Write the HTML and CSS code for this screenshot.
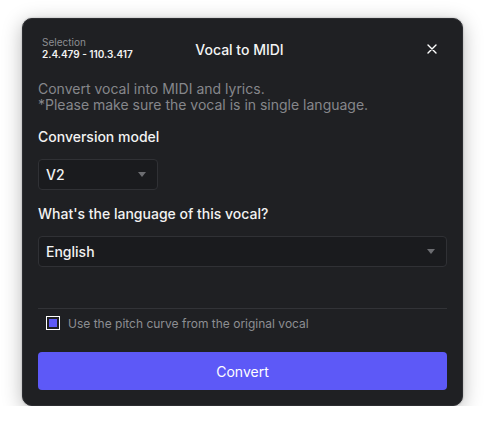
FILE: index.html
```html
<!DOCTYPE html>
<html>
<head>
<meta charset="utf-8">
<link rel="stylesheet" href="styles.css">
</head>
<body>
<div class="dialog">
  <div class="header">
    <div class="selection">
      <div class="sel-label">Selection</div>
      <div class="sel-range">2.4.479 - 110.3.417</div>
    </div>
    <div class="title">Vocal to MIDI</div>
    <div class="close">
      <svg width="10" height="10" viewBox="0 0 10 10"><path d="M1 1L9 9M9 1L1 9" stroke="#fff" stroke-width="1.4" stroke-linecap="round" fill="none"/></svg>
    </div>
  </div>
  <div class="desc">Convert vocal into MIDI and lyrics.<br>*Please make sure the vocal is in single language.</div>
  <div class="label">Conversion model</div>
  <div class="select small">
    <span>V2</span>
    <span class="arrow"></span>
  </div>
  <div class="label">What's the language of this vocal?</div>
  <div class="select">
    <span>English</span>
    <span class="arrow"></span>
  </div>
  <div class="sep"></div>
  <div class="check-row">
    <span class="checkbox"><span class="fill"></span></span>
    <span class="check-text">Use the pitch curve from the original vocal</span>
  </div>
  <div class="button">Convert</div>
</div>
</body>
</html>
```
FILE: styles.css
```css
* { box-sizing: border-box; }
html, body { margin: 0; padding: 0; background: #ffffff; }
body {
  font-family: Inter, "Noto Sans", "Liberation Sans", sans-serif;
  padding: 18px 0 0 22px;
}
.dialog {
  width: 441px;
  height: 388px;
  background: #1f2023;
  border-radius: 10px;
  border: 1px solid #2c2d31;
  box-shadow: 0 4px 20px rgba(0,0,0,0.28), 0 0 2px rgba(0,0,0,0.3);
  padding: 15px;
  display: flex;
  flex-direction: column;
}
.header {
  display: grid;
  grid-template-columns: 1fr auto 1fr;
  align-items: center;
  height: 30px;
  padding: 0 10px 0 4px;
}
.selection { display: flex; flex-direction: column; }
.sel-label { font-size: 10px; line-height: 11px; color: #8d8e92; }
.sel-range { font-size: 10px; line-height: 13px; color: #f2f2f2; font-weight: 600; }
.title { font-size: 14px; font-weight: 500; color: #f4f4f4; }
.close { justify-self: end; display: flex; }
.desc {
  margin-top: 17px;
  font-size: 14px;
  line-height: 16px;
  color: #86878b;
}
.label {
  margin-top: 16px;
  font-size: 14px;
  line-height: 16px;
  color: #f2f2f2;
  font-weight: 500;
}
.select {
  margin-top: 14px;
  height: 31px;
  background: #1a1b1e;
  border: 1px solid #303135;
  border-radius: 4px;
  display: flex;
  align-items: center;
  justify-content: space-between;
  padding: 0 11px 0 7px;
  font-size: 14px;
  color: #f2f2f2;
  font-weight: 500;
}
.select.small { width: 120px; }
.arrow {
  width: 0; height: 0;
  border-left: 4px solid transparent;
  border-right: 4px solid transparent;
  border-top: 5px solid #6c6d71;
}
.sep {
  margin-top: 41px;
  height: 1px;
  background: #323337;
}
.check-row {
  margin-top: 7px;
  display: flex;
  align-items: center;
  padding-left: 8px;
  height: 14px;
}
.checkbox {
  width: 14px; height: 14px;
  border: 1px solid #ffffff;
  padding: 2px;
  display: flex;
}
.fill { flex: 1; background: #5e5af6; }
.check-text {
  margin-left: 8px;
  font-size: 12px;
  color: #8d8e92;
}
.button {
  margin-top: 22px;
  height: 38px;
  background: #5d59f7;
  border-radius: 4px;
  color: #ffffff;
  font-size: 14px;
  font-weight: 400;
  display: flex;
  align-items: center;
  justify-content: center;
}
```
